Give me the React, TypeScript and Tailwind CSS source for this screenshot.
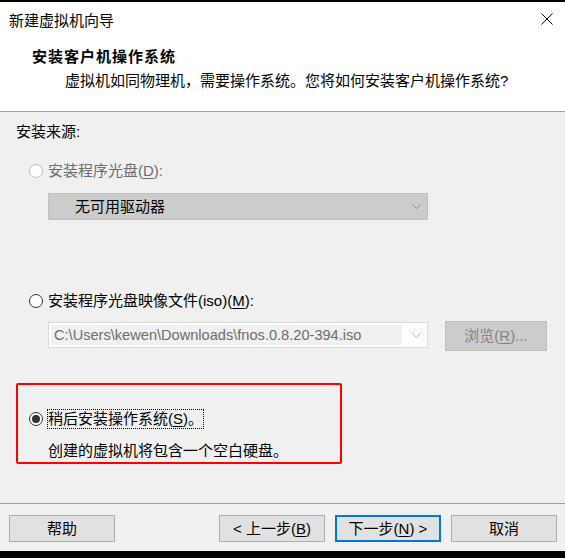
import React from 'react';

function Radio({ checked = false, disabled = false }: { checked?: boolean; disabled?: boolean }) {
  return (
    <span
      className={
        'flex h-[14px] w-[14px] shrink-0 items-center justify-center rounded-full border bg-white ' +
        (disabled ? 'border-[#bcbcbc]' : 'border-[#333333]')
      }
    >
      {checked && <span className="h-[8px] w-[8px] rounded-full bg-[#333333]" />}
    </span>
  );
}

function Chevron({ color }: { color: string }) {
  return (
    <svg width="9" height="5" viewBox="0 0 9 5" className="shrink-0">
      <path d="M0.5 0.5 L4.5 4.5 L8.5 0.5" fill="none" stroke={color} strokeWidth="1" />
    </svg>
  );
}

function Btn({ children, focused = false }: { children: React.ReactNode; focused?: boolean }) {
  return (
    <button
      className={
        'flex h-[27px] w-[106px] items-center justify-center bg-[#e1e1e1] text-[15px] leading-[20px] text-black ' +
        (focused ? 'border-2 border-[#0078d7]' : 'border border-[#adadad]')
      }
    >
      {children}
    </button>
  );
}

export default function App() {
  return (
    <div className="flex h-[558px] w-[565px] flex-col overflow-hidden bg-black font-['Liberation_Sans','Noto_Sans_CJK_SC',sans-serif] text-[15px] text-black">
      <div className="h-[2px] shrink-0" />

      {/* header */}
      <header className="h-[110px] shrink-0 border-b border-[#a0a0a0] bg-white">
        <div className="flex items-start justify-between pl-[9px] pr-[12px] pt-[9px]">
          <span className="leading-[20px]">新建虚拟机向导</span>
          <svg width="12" height="12" viewBox="0 0 12 12" className="mt-[2px]">
            <path d="M0.5 0.5 L11.5 11.5 M11.5 0.5 L0.5 11.5" stroke="#000" strokeWidth="1" />
          </svg>
        </div>
        <p className="mt-[16px] pl-[32px] font-bold leading-[20px] tracking-[1px]">安装客户机操作系统</p>
        <p className="mt-[4px] pl-[65px] leading-[20px]">虚拟机如同物理机，需要操作系统。您将如何安装客户机操作系统?</p>
      </header>

      {/* body */}
      <main className="flex h-[439px] shrink-0 flex-col bg-[#f0f0f0]">
        <p className="mt-[10px] pl-[16px] leading-[20px]">安装来源:</p>

        <div className="mt-[19px] flex items-center gap-[5px] pl-[29px] leading-[20px] text-[#6d6d6d]">
          <Radio disabled />
          <span>
            安装程序光盘(<span className="underline underline-offset-2">D</span>):
          </span>
        </div>

        <div className="ml-[48px] mt-[12px] flex h-[27px] w-[380px] items-center justify-between border border-[#bfbfbf] bg-[#cccccc] pl-[26px] pr-[6px]">
          <span className="leading-[20px]">无可用驱动器</span>
          <Chevron color="#8a8a8a" />
        </div>

        <div className="mt-[71px] flex items-center gap-[5px] pl-[29px] leading-[20px]">
          <Radio />
          <span>
            安装程序光盘映像文件(iso)(<span className="underline underline-offset-2">M</span>):
          </span>
        </div>

        <div className="mt-[10px] flex items-start pl-[48px]">
          <div className="mt-[1px] flex h-[26px] w-[380px] items-center border border-[#d9d9d9] bg-white p-[2px] pr-[6px]">
            <span className="flex h-full flex-1 items-center bg-[#f0f0f0] pl-[3px] text-[14.6px] leading-[20px] text-[#6d6d6d]">
              C:\Users\kewen\Downloads\fnos.0.8.20-394.iso
            </span>
            <span className="ml-[10px]">
              <Chevron color="#b0b0b0" />
            </span>
          </div>
          <div className="ml-[17px] flex h-[30px] w-[102px] items-center justify-center border border-[#bfbfbf] bg-[#cccccc] leading-[20px] text-[#838383]">
            浏览(<span className="underline underline-offset-2">R</span>)...
          </div>
        </div>

        <div className="ml-[16px] mt-[32px] h-[81px] w-[326px] rounded-[2px] border-2 border-[#ff0000]">
          <div className="mt-[24px] flex items-center gap-[4px] pl-[11px]">
            <Radio checked />
            <span className="border border-dotted border-black leading-[18px]">
              稍后安装操作系统(<span className="underline underline-offset-2">S</span>)。
            </span>
          </div>
          <p className="mt-[12px] pl-[30px] leading-[20px]">创建的虚拟机将包含一个空白硬盘。</p>
        </div>

        <div className="mt-[39px] h-px bg-[#a0a0a0]" />

        <div className="mt-[11px] flex items-center pl-[9px] pr-[8px]">
          <Btn>帮助</Btn>
          <div className="flex-1" />
          <div className="flex gap-[10px]">
            <Btn>
              &lt; 上一步(<span className="underline underline-offset-2">B</span>)
            </Btn>
            <Btn focused>
              下一步(<span className="underline underline-offset-2">N</span>) &gt;
            </Btn>
            <Btn>取消</Btn>
          </div>
        </div>
      </main>
    </div>
  );
}
